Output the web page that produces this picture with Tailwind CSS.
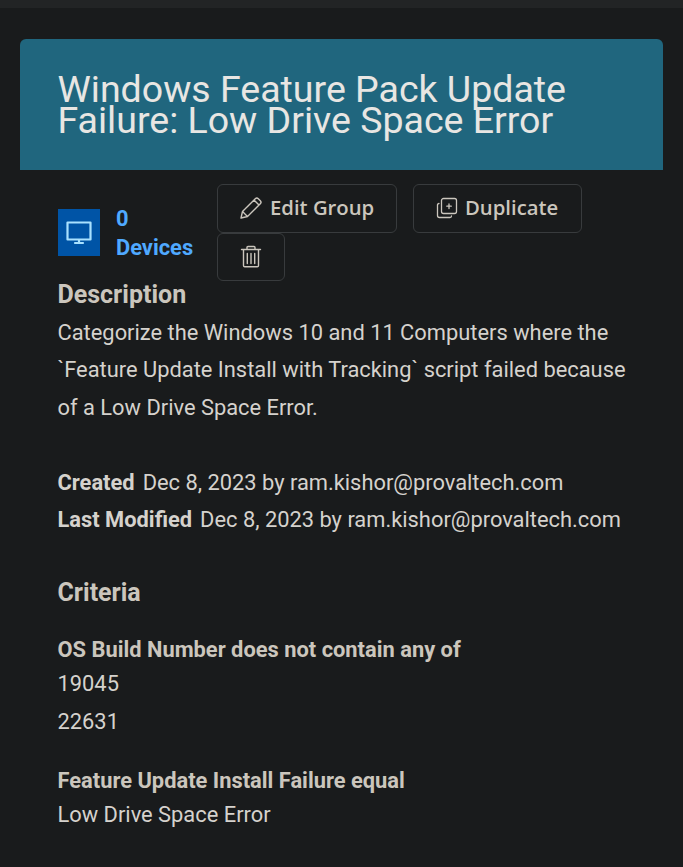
<!DOCTYPE html>
<html lang="en">
<head>
<meta charset="utf-8">
<title>Group details</title>
<script src="https://cdn.jsdelivr.net/npm/@tailwindcss/browser@4"></script>
</head>
<body class="h-[867px] overflow-hidden border-t-8 border-[#222425] bg-[#191b1c] font-[Roboto,sans-serif] text-[#d5d2cd]">
<main class="mx-5 pt-[31px]">
  <header class="h-[131px] rounded-t-[6px] bg-[#20667e] pl-[37.5px] pt-[34.7px] text-[37.5px] leading-[31.25px] text-[#e8e6e3]">
    <h1>Windows Feature Pack Update<br>Failure: Low Drive Space Error</h1>
  </header>
  <div class="pl-[37.5px]">
    <section class="flex h-[105px] pl-[0.5px] pt-[14px]">
      <div class="mt-[25px] flex h-[47px] w-[42px] shrink-0 items-center justify-center bg-[#0054a6]">
        <svg class="mr-px" width="26" height="24" viewBox="0 0 26 24" fill="none" stroke="#a9e1ff" stroke-width="2.2" stroke-linejoin="round" stroke-linecap="round"><path d="M1.500 1.500h23v17h-23zM13 18.500v3.500M9 22h8"/></svg>
      </div>
      <a class="ml-4 mt-5 w-[101px] shrink-0 text-[21.875px] font-bold leading-[29px] text-[#4fa9ff]">0<br>Devices</a>
      <div class="flex flex-1 flex-wrap content-start gap-x-4 font-[Open_Sans,sans-serif] text-[20.3px] font-semibold text-[#cbc6bd]">
        <button class="flex h-[49px] w-[180px] items-center rounded-[6px] border border-[#383b3d] pb-[2px] pl-[22px]">
          <svg class="mr-2 shrink-0" width="22" height="22" viewBox="0 0 22 22" fill="none" stroke="currentColor" stroke-width="1.4" stroke-linejoin="round" stroke-linecap="round"><path d="M1 21l1.500-6.500L15.300 1.700c.9-.9 2.100-.9 3 0l2 2c.9.9.9 2.100 0 3L7.500 19.500zM2.500 14.500l5 5M14 3l5 5"/></svg>
          <span>Edit Group</span>
        </button>
        <button class="flex h-[49px] w-[169px] items-center rounded-[6px] border border-[#383b3d] pb-[2px] pl-[22px]">
          <svg class="mr-[7px] shrink-0" width="22" height="22" viewBox="0 0 22 22" fill="none" stroke="currentColor" stroke-width="1.3" stroke-linecap="round"><rect x="5.5" y="1.500" width="15" height="15" rx="2"/><path d="M3 6.500q-1.500 0-1.500 1.500v10.500q0 2 2 2H14q1.500 0 1.500-1.500M13 7v4.500M10.800 9.200h4.500"/></svg>
          <span>Duplicate</span>
        </button>
        <button class="flex h-[48px] w-[68px] items-center justify-center rounded-[6px] border border-[#383b3d]" aria-label="Delete">
          <svg width="22" height="24" viewBox="0 0 22 24" fill="none" stroke="currentColor" stroke-width="1.4" stroke-linecap="round" stroke-linejoin="round"><path d="M1.500 4.500h19M7 4.500V2.500q0-1 1-1h6q1 0 1 1v2M3.500 4.500v16q0 1.200 1.200 1.200h12.600q1.200 0 1.200-1.200v-16M7.300 8.500v10M11 8.500v10M14.700 8.500v10"/></svg>
        </button>
      </div>
    </section>
    <h2 class="h-[38.7px] pt-px text-[25px] font-bold leading-[38.7px] text-[#cbc6bd]">Description</h2>
    <section class="text-[21.875px] leading-[37.5px]">
      <p>Categorize the Windows 10 and 11 Computers where the<br>`Feature Update Install with Tracking` script failed because<br>of a Low Drive Space Error.</p>
      <p class="mt-[37.5px]"><b class="mr-2">Created</b>Dec 8, 2023 by ram.kishor@provaltech.com</p>
      <p><b class="mr-2">Last Modified</b>Dec 8, 2023 by ram.kishor@provaltech.com</p>
    </section>
    <h2 class="mt-[35.2px] text-[25px] font-bold leading-[37.5px] text-[#cbc6bd]">Criteria</h2>
    <section class="text-[21.875px] leading-[37.5px]">
      <h3 class="mt-[23.8px] font-bold leading-[30px] text-[#cbc6bd]">OS Build Number does not contain any of</h3>
      <p>19045</p>
      <p>22631</p>
      <h3 class="mt-[25.5px] font-bold leading-[30px] text-[#cbc6bd]">Feature Update Install Failure equal</h3>
      <p>Low Drive Space Error</p>
    </section>
  </div>
</main>
</body>
</html>
